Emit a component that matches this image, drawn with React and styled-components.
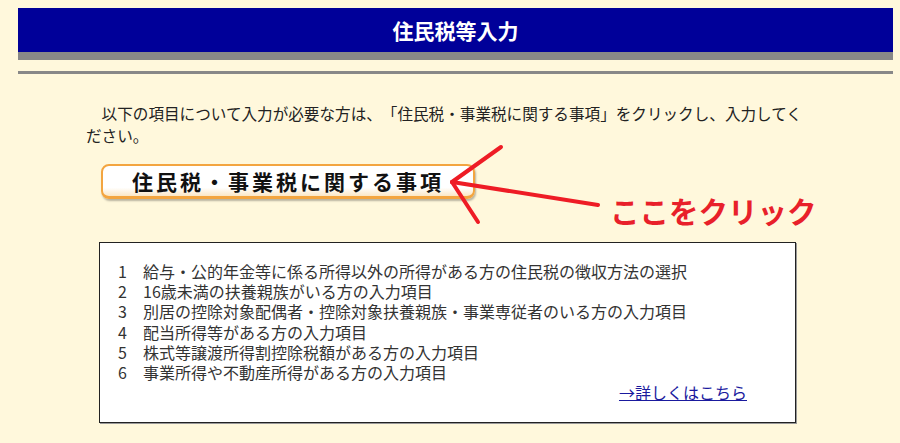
import styled, { createGlobalStyle } from 'styled-components'

// page-wide rules
const GlobalStyle = createGlobalStyle`
html, body {
  margin: 0;
  padding: 0;
  background: #fff8dc;
}
body {
  font-family: "Noto Sans CJK JP", "Noto Sans", sans-serif;
  color: #222;
  text-spacing-trim: space-all;
}
`

const Page = styled.div`
width: 900px;
height: 443px;
padding-top: 8px;
box-sizing: border-box;
overflow: hidden;
`

const TitleBar = styled.div`
margin: 0 7px 0 18px;
height: 44px;
background-color: #000099;
border-bottom: 8px solid #888888;
display: flex;
align-items: center;
justify-content: center;
`

const Title = styled.h1`
margin: 0;
color: #ffffff;
font-size: 21px;
font-weight: bold;
letter-spacing: 0;
`

const Rule = styled.div`
margin: 11px 7px 0 18px;
height: 3px;
background-color: #888888;
`

const Main = styled.div`
padding-left: 86px;
`

const Lead = styled.p`
margin: 28px 0 0;
width: 725px;
font-size: 15.6px;
line-height: 22px;
text-indent: 1em;
color: #222;
`

const ClickRow = styled.div`
position: relative;
display: flex;
align-items: flex-start;
margin: 18px 0 0 15px;
height: 61px;
`

const SectionButton = styled.button`
width: 374px;
height: 35px;
padding: 0;
box-sizing: border-box;
border: 2px solid #f3a540;
border-bottom-width: 3px;
border-radius: 8px;
background: linear-gradient(#ffffff 0%, #ffffff 72%, #fbe7c6 100%);
box-shadow: 1px 2px 2px rgba(0, 0, 0, 0.28);
font-family: "Noto Sans CJK JP", sans-serif;
font-size: 21px;
font-weight: bold;
letter-spacing: 3px;
color: #111;
cursor: pointer;
display: flex;
align-items: center;
justify-content: center;
`

const Callout = styled.span`
margin: 31px 0 0 135px;
font-size: 29.5px;
line-height: 30px;
font-weight: bold;
color: #e8202a;
white-space: nowrap;
`

const ArrowMark = styled.svg`
position: absolute;
left: 0;
top: -30px;
pointer-events: none;
`

const InfoBox = styled.div`
margin: 17px 0 0 13px;
width: 697px;
height: 181px;
box-sizing: border-box;
background: #ffffff;
border: 1px solid #222;
box-shadow: 1px 1px 0 #999;
padding: 18px 48px 0 18px;
`

const ItemList = styled.ol`
list-style: none;
margin: 0;
padding: 0;
`

const Item = styled.li`
display: flex;
align-items: center;
height: 20.2px;
font-size: 16px;
line-height: 18px;
color: #333;
white-space: nowrap;
`

const ItemNo = styled.span`
width: 25px;
flex-shrink: 0;
`

const MoreRow = styled.div`
display: flex;
justify-content: flex-end;
font-size: 16px;
line-height: 20px;
`

const MoreLink = styled.a`
color: #1a1a9e;
text-decoration: underline;
`

const items = [
  '給与・公的年金等に係る所得以外の所得がある方の住民税の徴収方法の選択',
  '16歳未満の扶養親族がいる方の入力項目',
  '別居の控除対象配偶者・控除対象扶養親族・事業専従者のいる方の入力項目',
  '配当所得等がある方の入力項目',
  '株式等譲渡所得割控除税額がある方の入力項目',
  '事業所得や不動産所得がある方の入力項目',
]

function App () {
  return (
    <Page>
      <GlobalStyle />
      <TitleBar>
        <Title>住民税等入力</Title>
      </TitleBar>
      <Rule />
      <Main>
        <Lead>以下の項目について入力が必要な方は、「住民税・事業税に関する事項」をクリックし、入力してください。</Lead>
        <ClickRow>
          <SectionButton>住民税・事業税に関する事項</SectionButton>
          <Callout>ここをクリック</Callout>
          <ArrowMark width="520" height="100" viewBox="0 0 520 100">
            <g stroke="#ee1c25" strokeWidth="4" strokeLinecap="round">
              <line x1="351" y1="48" x2="400" y2="13" />
              <line x1="351" y1="48" x2="497" y2="71" />
              <line x1="351" y1="48" x2="377" y2="88" />
            </g>
          </ArrowMark>
        </ClickRow>
        <InfoBox>
          <ItemList>
            {items.map((text, i) => (
              <Item key={i}>
                <ItemNo>{i + 1}</ItemNo>
                {text}
              </Item>
            ))}
          </ItemList>
          <MoreRow>
            <MoreLink href="#">→詳しくはこちら</MoreLink>
          </MoreRow>
        </InfoBox>
      </Main>
    </Page>
  )
}

export default App
